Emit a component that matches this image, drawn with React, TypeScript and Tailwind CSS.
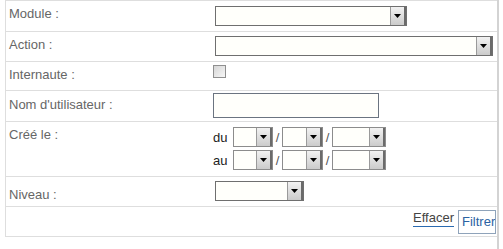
import React from "react";

function Arrow() {
  return (
    <svg width="7" height="4" viewBox="0 0 7 4" className="block">
      <path d="M0 0 H7 L3.5 4 Z" fill="#000" />
    </svg>
  );
}

function Select({ w, light }: { w: number; light?: boolean }) {
  return (
    <div
      className={
        "h-[20px] flex justify-end bg-[#fffffb] border " +
        (light ? "border-[#8c8c8c]" : "border-[#6f6f6f]")
      }
      style={{ width: w }}
    >
      <div className="w-[16px] h-full border-l border-[#9a9a9a] border-r-2 border-r-[#6a6a6a] flex items-center justify-center bg-gradient-to-b from-[#f2f2f2] to-[#cbcbcb]">
        <Arrow />
      </div>
    </div>
  );
}

function DateRow({ label }: { label: string }) {
  return (
    <div className="flex items-center h-[20px]">
      <span className="w-[20px] text-[#222] leading-[15px]">{label}</span>
      <Select w={40} light />
      <span className="w-[9px] text-center text-[#555] leading-[15px]">/</span>
      <Select w={41} light />
      <span className="w-[9px] text-center text-[#555] leading-[15px]">/</span>
      <Select w={54} light />
    </div>
  );
}

function Row({
  h,
  lp,
  cp,
  label,
  children,
}: {
  h: number;
  lp: number;
  cp: number;
  label: string;
  children?: React.ReactNode;
}) {
  return (
    <div className="flex border-b border-[#dedede]" style={{ height: h + 1 }}>
      <div className="w-[207px] pl-[3px] text-[#666] leading-[15px]" style={{ paddingTop: lp }}>
        {label}
      </div>
      <div className="flex-1" style={{ paddingTop: cp }}>
        {children}
      </div>
    </div>
  );
}

export default function App() {
  return (
    <div className="w-[503px] h-[249px] bg-white font-['Liberation_Sans',Arial,sans-serif] text-[13px]">
      <div className="flex h-full">
        <div className="ml-[5px] w-[492px] self-start border-l border-t border-[#dedede]">
          <Row h={30} lp={5} cp={5} label="Module :">
            <div className="pl-[2px]">
              <Select w={192} />
            </div>
          </Row>
          <Row h={29} lp={5} cp={4} label="Action :">
            <div className="pl-[2px]">
              <Select w={278} />
            </div>
          </Row>
          <Row h={28} lp={5} cp={3} label="Internaute :">
            <div className="w-[13px] h-[13px] border border-[#8f8f8f] bg-gradient-to-br from-[#d6d6d6] to-[#f7f7f7]" />
          </Row>
          <Row h={30} lp={6} cp={2} label="Nom d'utilisateur :">
            <div className="w-[166px] h-[25px] border border-[#6b7480] bg-[#fffffb]" />
          </Row>
          <Row h={54} lp={5} cp={5} label="Créé le :">
            <div className="flex flex-col gap-[3px]">
              <DateRow label="du" />
              <DateRow label="au" />
            </div>
          </Row>
          <Row h={29} lp={10} cp={4} label="Niveau :">
            <div className="pl-[2px]">
              <Select w={89} />
            </div>
          </Row>
          <div className="flex justify-end items-start h-[30px] border-b border-[#dedede] pr-[1px] pt-[3px] gap-[4px]">
            <span className="leading-[15px] pb-[1px] border-b border-[#2a6ab0] text-[#444]">Effacer</span>
            <div className="w-[38px] h-[24px] border border-[#8fa3ba] bg-white overflow-hidden whitespace-nowrap pl-[3px] pt-[3px] leading-[15px] text-[#2b62a3]">
              Filtrer
            </div>
          </div>
        </div>
        <div className="w-[2px] h-full bg-[#d3d3d3]" />
      </div>
    </div>
  );
}
